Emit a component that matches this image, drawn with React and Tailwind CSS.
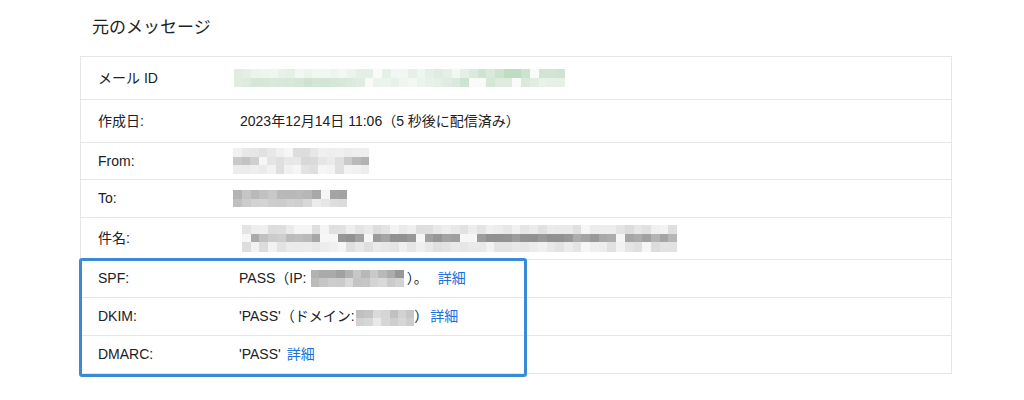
import React from 'react';

// pixelated "redacted" blocks, drawn as a small grid of squares
function Mosaic({ cols, rows, cell = 8.7, tone = 'gray', seed = 1, className = '' }) {
  let s = seed * 9301 + 49297;
  const rand = () => {
    s = (s * 9301 + 49297) % 233280;
    return s / 233280;
  };

  const rects = [];
  let walk = 0.35;
  for (let r = 0; r < rows; r++) {
    const middle = rows === 2 ? r === 0 : r === 1;
    for (let c = 0; c < cols; c++) {
      walk = Math.min(0.7, Math.max(0.1, walk + (rand() - 0.5) * 0.3));
      let t = middle ? walk : 0.04 + rand() * 0.16;
      if (rows === 2 && !middle) t = walk * 0.55 + rand() * 0.1;
      if (rand() < 0.06) t = 0.03;
      const fill =
        tone === 'green'
          ? `rgb(${Math.round(252 - t * 100)},${Math.round(252 - t * 55)},${Math.round(252 - t * 95)})`
          : `rgb(${Math.round(250 - t * 150)},${Math.round(250 - t * 150)},${Math.round(250 - t * 150)})`;
      rects.push(<rect key={`${r}-${c}`} x={c * cell} y={r * cell} width={cell + 0.5} height={cell + 0.5} fill={fill} />);
    }
  }

  return (
    <svg width={cols * cell} height={rows * cell} shapeRendering="crispEdges" className={`block shrink-0 ${className}`}>
      {rects}
    </svg>
  );
}

const Link = ({ children }) => (
  <a href="#" className="text-[#1a6fe0] no-underline">{children}</a>
);

function Row({ label, height, children, first }) {
  return (
    <div className={`flex items-center ${height} ${first ? '' : 'border-t border-[#e6e6e6]'}`}>
      <div className="w-[153px] shrink-0 pl-[17px]">{label}</div>
      <div className="flex items-center min-w-0">{children}</div>
    </div>
  );
}

export default function App() {
  return (
    <div
      className="relative w-[1024px] h-[400px] bg-white text-[#202124] overflow-hidden"
      style={{ fontFamily: '"Liberation Sans", "Noto Sans CJK JP", sans-serif' }}
    >
      <h1 className="pt-[17px] pl-[92px] text-[17px] leading-[22px] font-normal">元のメッセージ</h1>

      {/* header table */}
      <div className="mt-[17px] ml-[80px] w-[872px] border border-[#e6e6e6] text-[14px]">
        <Row first label="メール ID" height="h-[42px]">
          <Mosaic cols={38} rows={2} cell={8.7} tone="green" seed={3} />
        </Row>
        <Row label="作成日:" height="h-[43px]">
          <span className="ml-[6px]">2023年12月14日 11:06（5 秒後に配信済み）</span>
        </Row>
        <Row label="From:" height="h-[37px]">
          <Mosaic cols={16} rows={3} cell={8.5} seed={7} className="-ml-[1px]" />
        </Row>
        <Row label="To:" height="h-[38px]">
          <Mosaic cols={13} rows={2} cell={8.8} seed={11} className="-ml-[1px]" />
        </Row>
        <Row label="件名:" height="h-[42px]">
          <Mosaic cols={50} rows={3} cell={8.7} seed={19} className="ml-[8px]" />
        </Row>
        <Row label="SPF:" height="h-[38px]">
          <span className="ml-[5px] flex items-center whitespace-nowrap">
            PASS（IP:
            <Mosaic cols={11} rows={2} cell={8.4} seed={23} className="ml-[5px] mr-[3px]" />
            ）。
            <span className="ml-[10px]"><Link>詳細</Link></span>
          </span>
        </Row>
        <Row label="DKIM:" height="h-[38px]">
          <span className="ml-[5px] flex items-center whitespace-nowrap">
            'PASS'（ドメイン:
            <Mosaic cols={7} rows={2} cell={8.4} seed={31} className="ml-[1px] mt-[3px]" />
            ）
            <span className="ml-[2px]"><Link>詳細</Link></span>
          </span>
        </Row>
        <Row label="DMARC:" height="h-[38px]">
          <span className="ml-[5px] whitespace-nowrap">
            'PASS'<span className="ml-[6px]"><Link>詳細</Link></span>
          </span>
        </Row>
      </div>

      {/* highlight around the authentication rows */}
      <div className="absolute left-[79px] top-[258px] w-[448px] h-[119px] border-[3px] border-[#3a8ad8] rounded-[3px] pointer-events-none" />
    </div>
  );
}
